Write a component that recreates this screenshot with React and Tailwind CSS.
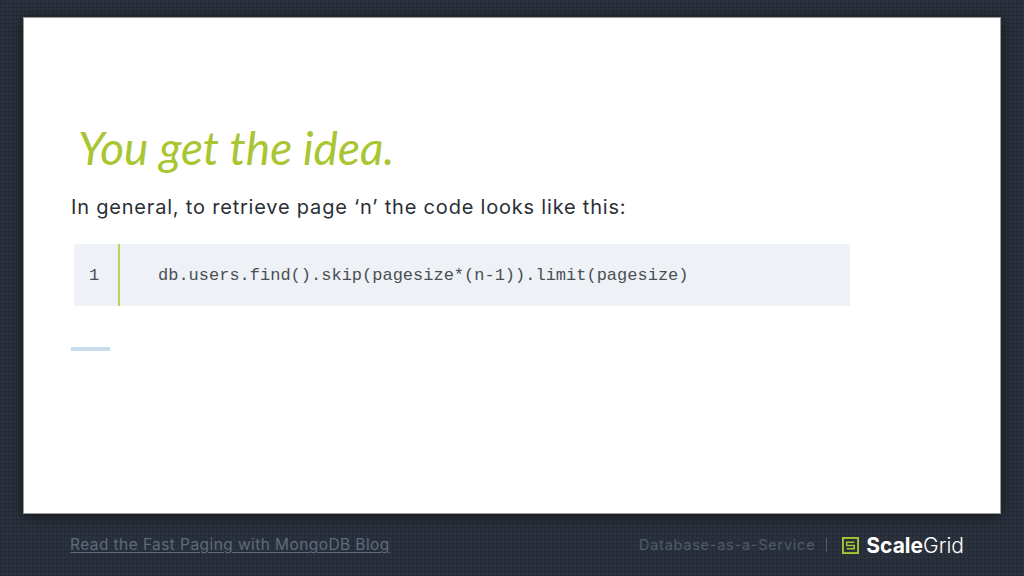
export default function App() {
  return (
    <div className="w-[1024px] h-[576px] overflow-hidden flex flex-col px-[23px] pt-[17px] bg-[#2b323e] bg-[repeating-linear-gradient(0deg,rgba(0,0,0,0.10)_0px,rgba(0,0,0,0.10)_1px,transparent_1px,transparent_4px),repeating-linear-gradient(90deg,rgba(0,0,0,0.10)_0px,rgba(0,0,0,0.10)_1px,transparent_1px,transparent_4px)]" style={{ fontFamily: 'Inter, sans-serif' }}>
      <div className="h-[497px] shrink-0 bg-white border border-[#9a9a9a] shadow-[0_2px_14px_rgba(0,0,0,0.55)] pl-[47px] pt-[100px] flex flex-col items-start">
        <h1 className="ml-[7px] text-[#a8c532] text-[46px] leading-[60px] italic font-normal" style={{ fontFamily: 'Lato, sans-serif' }}>You get the idea.</h1>
        <p className="mt-[15px] text-[#2b2f36] text-[20px] leading-[28px] tracking-[0.8px]">In general, to retrieve page ‘n’ the code looks like this:</p>
        <div className="mt-[23px] ml-[3px] w-[776px] h-[62px] bg-[#eef2f6] flex items-center text-[17px] text-[#4a4f55]" style={{ fontFamily: '"Liberation Mono", monospace' }}>
          <span className="w-[44px] shrink-0 text-center pr-[4px] pt-[1px]">1</span>
          <div className="w-[2px] self-stretch bg-[#bcd35a] shrink-0"></div>
          <span className="ml-[38px] pt-[1px]">db.users.find().skip(pagesize*(n-1)).limit(pagesize)</span>
        </div>
        <div className="mt-[41px] w-[39px] h-[4px] bg-[#c9dcee]"></div>
      </div>
      <div className="flex items-center justify-between pl-[47px] pr-[37px] h-[62px]">
        <a className="text-[#5d6b7c] text-[15.5px] underline underline-offset-2 tracking-[0.42px]">Read the Fast Paging with MongoDB Blog</a>
        <div className="flex items-center">
          <span className="text-[#505b69] text-[14.5px] tracking-[0.75px]">Database-as-a-Service</span>
          <span className="ml-[11px] w-px h-[14px] bg-[#505b69]"></span>
          <svg className="ml-[15px]" width="17" height="17" viewBox="0 0 18 18" fill="none">
            <rect x="1" y="1" width="16" height="16" fill="#2a313d" stroke="#a8c532" strokeWidth="2" />
            <path d="M13 5.5H5v3.5h8v3.5H5" stroke="#a8c532" strokeWidth="1.6" fill="none" />
          </svg>
          <span className="ml-[7px] text-white text-[21px] leading-none font-bold">Scale<span className="font-light">Grid</span></span>
        </div>
      </div>
    </div>
  );
}
